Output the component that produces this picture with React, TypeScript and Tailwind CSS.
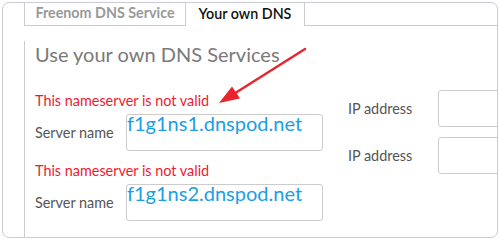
export default function App() {
  return (
    <div className="relative w-[500px] h-[240px] bg-white p-[2px] font-['Lato',sans-serif]">
      <div className="h-full rounded-[7px] border border-[#cacad8] overflow-hidden">
        {/* Tabs */}
        <div className="flex h-[23px] pl-[21px]">
          <div className="w-[162px] border-x border-b border-[#cccccc] text-center text-[14.3px] font-bold leading-[20px] text-[#999999]">
            Freenom DNS Service
          </div>
          <div className="w-[119px] border-r border-[#cccccc] text-center text-[14.3px] font-semibold leading-[22px] text-[#111111]">
            Your own DNS
          </div>
          <div className="flex-1 border-b border-[#cccccc]" />
        </div>

        {/* Panel */}
        <div className="ml-[21px] h-full border-l border-[#cccccc] pl-[10px]">
          <h2 className="mt-[15px] text-[20px] leading-[26px] font-normal text-[#7a7a7a]">
            Use your own DNS Services
          </h2>

          <div className="mt-[23px] flex items-start">
            <div className="w-[288px] pt-[2px]">
              {["f1g1ns1.dnspod.net", "f1g1ns2.dnspod.net"].map((ns, i) => (
                <div key={ns} className={i > 0 ? "mt-[11px]" : ""}>
                  <div className="text-[14.4px] leading-[18px] text-[#f01a32]">
                    This nameserver is not valid
                  </div>
                  <div className="mt-[4px] flex items-center">
                    <div className="w-[91px] text-[14.4px] leading-[18px] text-[#555555]">
                      Server name
                    </div>
                    <div className="w-[197px] h-[37px] rounded-[3px] border border-[#cccccc] text-[20px] leading-[16px] text-[#1a9ee6]">
                      {ns}
                    </div>
                  </div>
                </div>
              ))}
            </div>

            <div className="ml-[25px] flex flex-col gap-[10px]">
              {[0, 1].map((i) => (
                <div key={i} className="flex items-center">
                  <div className="w-[90px] text-[14.4px] leading-[18px] text-[#555555]">
                    IP address
                  </div>
                  <div className="w-[100px] h-[37px] rounded-[3px] border border-[#cccccc]" />
                </div>
              ))}
            </div>
          </div>
        </div>
      </div>

      {/* Annotation arrow */}
      <svg className="pointer-events-none absolute left-0 top-0" width="500" height="240">
        <line x1="305" y1="49" x2="229" y2="97" stroke="#e8242c" strokeWidth="2.4" strokeLinecap="round" />
        <polygon points="219,103 232,86.5 240,98.5" fill="#e8242c" />
      </svg>
    </div>
  );
}
